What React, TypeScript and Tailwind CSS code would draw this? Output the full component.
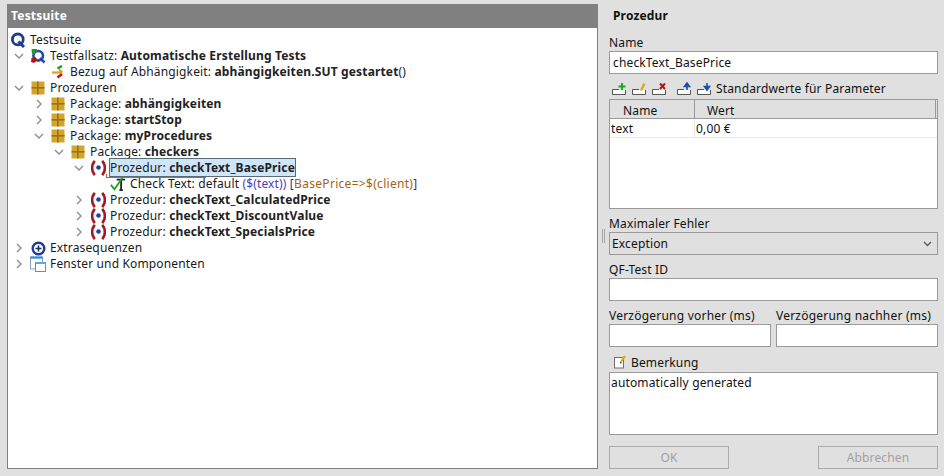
import React from "react";

const Chevron = ({ open }: { open: boolean }) => (
  <svg width="10" height="10" viewBox="0 0 10 10" className="shrink-0" fill="none" stroke="#8c8c8c" strokeWidth="1.4">
    {open ? <path d="M1 3 L5 7 L9 3" /> : <path d="M3 1 L7 5 L3 9" />}
  </svg>
);

const QIcon = () => (
  <svg width="16" height="16" viewBox="0 0 16 16" fill="none">
    <circle cx="7.8" cy="7.4" r="5.4" stroke="#1c3f94" strokeWidth="2.8" />
    <path d="M8.5 9.5 L14 15" stroke="#1c3f94" strokeWidth="3" />
  </svg>
);

const SetIcon = () => (
  <svg width="16" height="16" viewBox="0 0 16 16" fill="none">
    <circle cx="8.2" cy="7.8" r="4.8" stroke="#1c4fa8" strokeWidth="2.6" />
    <path d="M10 10 L14.5 14.5" stroke="#1c4fa8" strokeWidth="2.6" />
    <path d="M1.5 1 H7 V4 H5 V6 H2 Z" fill="#1f9a2e" />
    <path d="M1 14 L1.5 10 L5.5 9 L7.5 12 L4 15 Z" fill="#b5121b" />
  </svg>
);

const RefIcon = () => (
  <svg width="15" height="15" viewBox="0 0 15 15" fill="none">
    <path d="M1 7.5 H10" stroke="#e0a010" strokeWidth="2.2" />
    <path d="M8 4.5 L11.5 7.5" stroke="#e0a010" strokeWidth="2" />
    <path d="M6.5 3.5 L11 1" stroke="#1f9a2e" strokeWidth="2.4" />
    <path d="M6.5 12.5 L11 9" stroke="#b5121b" strokeWidth="2.4" />
  </svg>
);

const PkgIcon = () => (
  <svg width="14" height="14" viewBox="0 0 14 14">
    <rect x="0.5" y="0.5" width="13" height="13" fill="#d2a52e" />
    <rect x="6" y="0.5" width="1.6" height="13" fill="#9a7417" />
    <rect x="0.5" y="6" width="13" height="1.6" fill="#9a7417" />
  </svg>
);

const ProcIcon = () => (
  <svg width="15" height="16" viewBox="0 0 15 16" fill="none">
    <path d="M3.8 0.8 C0.2 5 0.2 11 3.8 15.2" stroke="#a81820" strokeWidth="2.6" />
    <path d="M11.2 0.8 C14.8 5 14.8 11 11.2 15.2" stroke="#a81820" strokeWidth="2.6" />
    <circle cx="7.5" cy="7.5" r="2.3" fill="#1f3fa8" />
  </svg>
);

const CheckIcon = () => (
  <svg width="18" height="16" viewBox="0 0 18 16" fill="none">
    <path d="M7.5 3 H17 M12.5 3 V15 M10.5 15 H14.5" stroke="#222" strokeWidth="2" />
    <path d="M1 9 L5 14 L14 1" stroke="#16a51f" strokeWidth="2" />
  </svg>
);

const SeqIcon = () => (
  <svg width="15" height="15" viewBox="0 0 15 15" fill="none">
    <circle cx="7.5" cy="7.5" r="5.8" stroke="#1f3f94" strokeWidth="2.4" />
    <path d="M4.5 7.5 H10.5 M7.5 4.5 V10.5" stroke="#1f2f60" strokeWidth="1.6" />
  </svg>
);

const WinIcon = () => (
  <svg width="16" height="16" viewBox="0 0 16 16" fill="none">
    <rect x="0.5" y="1" width="12" height="12" fill="#fff" stroke="#8aa0b8" />
    <rect x="0.5" y="0.5" width="12" height="2.2" fill="#2f8fe0" />
    <rect x="5.5" y="6.5" width="10" height="9" fill="#fff" stroke="#808890" />
    <rect x="5.5" y="6" width="10" height="2" fill="#5aa8e8" />
  </svg>
);

const indent: Record<number, string> = {
  0: "pl-[2px]",
  1: "pl-[6px]",
  2: "pl-[26px]",
  3: "pl-[46px]",
  4: "pl-[66px]",
  5: "pl-[86px]",
};

type RowProps = {
  depth: number;
  chevron?: "open" | "closed";
  icon: React.ReactNode;
  children: React.ReactNode;
};

const Row = ({ depth, chevron, icon, children }: RowProps) => (
  <div className={`flex h-4 items-center whitespace-nowrap ${indent[depth]}`}>
    {depth > 0 && (
      <span className="mr-[6px] flex w-[10px] shrink-0 justify-center">
        {chevron && <Chevron open={chevron === "open"} />}
      </span>
    )}
    <span className="flex h-4 w-[16px] shrink-0 items-center justify-center">{icon}</span>
    <span className="ml-[4px]">{children}</span>
  </div>
);

const B = ({ children }: { children: React.ReactNode }) => (
  <b className="font-bold tracking-[0.15px] text-[#222]">{children}</b>
);

const Tree = () => (
  <div className="flex-1 border-x border-b border-[#808080] bg-white pt-[3px] text-[12px] tracking-[0.15px] text-[#1a1a1a]">
    <div className="pt-[1px]">
      <Row depth={0} icon={<QIcon />}>Testsuite</Row>
      <Row depth={1} chevron="open" icon={<SetIcon />}>Testfallsatz: <B>Automatische Erstellung Tests</B></Row>
      <Row depth={2} icon={<RefIcon />}>Bezug auf Abhängigkeit: <B>abhängigkeiten.SUT gestartet</B>()</Row>
      <Row depth={1} chevron="open" icon={<PkgIcon />}>Prozeduren</Row>
      <Row depth={2} chevron="closed" icon={<PkgIcon />}>Package: <B>abhängigkeiten</B></Row>
      <Row depth={2} chevron="closed" icon={<PkgIcon />}>Package: <B>startStop</B></Row>
      <Row depth={2} chevron="open" icon={<PkgIcon />}>Package: <B>myProcedures</B></Row>
      <Row depth={3} chevron="open" icon={<PkgIcon />}>Package: <B>checkers</B></Row>
      <Row depth={4} chevron="open" icon={<ProcIcon />}>
        <span className="relative -mx-[1px] border border-[#5a6a78] bg-[#cfe6f8]">
          Prozedur: <B>checkText_BasePrice</B>
          <span className="absolute -left-[4px] bottom-[-2px] h-[1px] w-[100px] bg-[#d9572b]" />
          <span className="absolute -left-[4px] bottom-[-2px] h-[4px] w-[1px] bg-[#d9572b]" />
        </span>
      </Row>
      <Row depth={5} icon={<CheckIcon />}>
        Check Text: default <span className="text-[#4b3fc0]">($(text))</span>{" "}
        <span className="tracking-[0.3px] text-[#a8620f]"><span className="text-[#5a1a8a]">[</span>BasePrice=&gt;$(client)<span className="text-[#5a1a8a]">]</span></span>
      </Row>
      <Row depth={4} chevron="closed" icon={<ProcIcon />}>Prozedur: <B>checkText_CalculatedPrice</B></Row>
      <Row depth={4} chevron="closed" icon={<ProcIcon />}>Prozedur: <B>checkText_DiscountValue</B></Row>
      <Row depth={4} chevron="closed" icon={<ProcIcon />}>Prozedur: <B>checkText_SpecialsPrice</B></Row>
      <Row depth={1} chevron="closed" icon={<SeqIcon />}>Extrasequenzen</Row>
      <Row depth={1} chevron="closed" icon={<WinIcon />}>Fenster und Komponenten</Row>
    </div>
  </div>
);

const Tool = ({ children }: { children: React.ReactNode }) => (
  <svg width="15" height="14" viewBox="0 0 15 14" fill="none" className="shrink-0">
    <rect x="1" y="8" width="12" height="4" fill="#fff" />
    <path d="M7 7.5 H0.5 V12.5 H13.5 V8" stroke="#555" strokeWidth="1" />
    {children}
  </svg>
);

const Label = ({ children }: { children: React.ReactNode }) => (
  <div className="h-[18px] leading-[20px] text-[#111]">{children}</div>
);

const Field = ({ children, className = "" }: { children?: React.ReactNode; className?: string }) => (
  <div className={`flex h-[23px] items-center border border-[#9a9a9a] bg-white px-[3px] pt-[1px] ${className}`}>{children}</div>
);

const Form = () => (
  <div className="flex w-[329px] shrink-0 flex-col text-[12px] tracking-[0.15px] text-[#111]">
    <div className="h-[26px] pl-[4px] pt-[3px] font-bold leading-[18px]">Prozedur</div>
    <div className="mt-[3px]"><Label>Name</Label></div>
    <Field>checkText_BasePrice</Field>
    <div className="mt-[5px] flex h-[20px] items-center pl-[3px]">
      <div className="flex items-center gap-[5px]">
        <Tool><path d="M10 1 V8 M6.5 4.5 H13.5" stroke="#17a81f" strokeWidth="2" /></Tool>
        <Tool><path d="M9 8.5 L12.5 1.5" stroke="#e0a810" strokeWidth="2.4" /></Tool>
        <Tool><path d="M8 1.5 L13 7 M13 1.5 L8 7" stroke="#b5121b" strokeWidth="2" /></Tool>
      </div>
      <div className="ml-[10px] flex items-center gap-[5px]">
        <Tool><path d="M10 8 V3 M7.5 4.5 L10 1 L12.5 4.5 Z" stroke="#1f4fa8" strokeWidth="1.6" fill="#1f4fa8" /></Tool>
        <Tool><path d="M10 1 V6 M7.5 4.5 L10 8 L12.5 4.5 Z" stroke="#1f4fa8" strokeWidth="1.6" fill="#1f4fa8" /></Tool>
      </div>
      <span className="ml-[4px]">Standardwerte für Parameter</span>
    </div>
    <div className="h-[110px] border border-[#9a9a9a] bg-white">
      <div className="flex h-[19px] border-b border-[#9a9a9a] bg-[#e0e0e0] pr-[1px]">
        <div className="w-[85px] border-r border-[#9a9a9a] pl-[13px] leading-[21px]">Name</div>
        <div className="flex-1 pl-[12px] leading-[21px]">Wert</div>
        <div className="w-[1px] bg-[#9a9a9a]" />
      </div>
      <div className="flex h-[19px] border-b border-[#e8e8e8] leading-[20px]">
        <div className="w-[85px] border-r border-[#e8e8e8] pl-[1px]">text</div>
        <div className="flex-1 pl-[1px]">0,00 €</div>
      </div>
    </div>
    <div className="mt-[5px]"><Label>Maximaler Fehler</Label></div>
    <div className="flex h-[23px] items-center justify-between border border-[#9a9a9a] bg-[#e0e0e0] pl-[2px] pr-[5px]">
      <span>Exception</span>
      <svg width="9" height="6" viewBox="0 0 9 6" fill="none" stroke="#555" strokeWidth="1.3"><path d="M1 1 L4.5 4.5 L8 1" /></svg>
    </div>
    <div className="mt-[5px]"><Label>QF-Test ID</Label></div>
    <Field />
    <div className="mt-[5px] flex gap-[5px] tracking-[0.22px]">
      <div className="w-[162px]">
        <Label>Verzögerung vorher (ms)</Label>
        <Field />
      </div>
      <div className="flex-1">
        <Label>Verzögerung nachher (ms)</Label>
        <Field />
      </div>
    </div>
    <div className="mt-[6px] flex h-[18px] items-center pl-[5px]">
      <svg width="14" height="14" viewBox="0 0 14 14" fill="none" className="shrink-0">
        <rect x="0.5" y="2.5" width="9" height="10.5" fill="#fff" stroke="#707070" />
        <path d="M7 7 L11 1" stroke="#e0a810" strokeWidth="2.2" />
        <rect x="6" y="7" width="1.4" height="1.4" fill="#333" />
      </svg>
      <span className="ml-[3px] pt-[2px]">Bemerkung</span>
    </div>
    <div className="mt-[1px] h-[63px] border border-[#9a9a9a] bg-white pl-[1px] leading-[20px]">automatically generated</div>
    <div className="mt-[11px] flex justify-between text-[#a0a0a0]">
      <div className="flex h-[23px] w-[120px] items-center justify-center border border-[#ababab]">OK</div>
      <div className="flex h-[23px] w-[120px] items-center justify-center border border-[#ababab]">Abbrechen</div>
    </div>
  </div>
);

export default function App() {
  return (
    <div className="flex h-[476px] w-[944px] overflow-hidden bg-[#e0e0e0] pl-[7px] pt-[4px] font-['Noto_Sans',sans-serif]">
      <div className="flex h-[465px] w-[591px] shrink-0 flex-col">
        <div className="flex h-[24px] items-center bg-[#808080] pl-[4px] text-[12px] font-bold tracking-[0.2px] text-white">Testsuite</div>
        <Tree />
      </div>
      <div className="flex w-[11px] shrink-0 items-start justify-center pt-[225px]">
        <div className="h-[14px] w-[3px] border-x border-[#a8a8a8]" />
      </div>
      <Form />
    </div>
  );
}
